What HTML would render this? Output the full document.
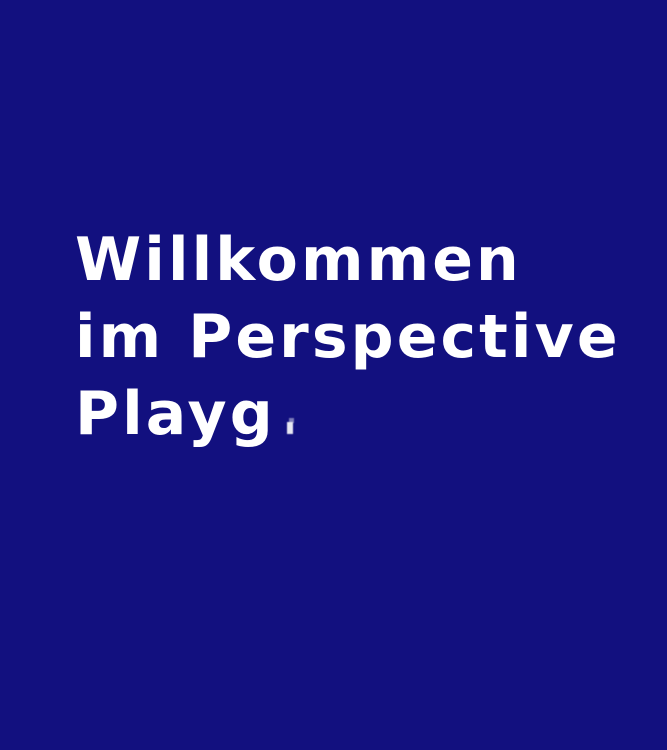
<!DOCTYPE html>
<html><head><meta charset="utf-8"><style>
html,body{margin:0;padding:0;}
body{width:667px;height:750px;background:#12107f;position:relative;overflow:hidden;font-family:"DejaVu Sans","Liberation Sans",sans-serif;}
h1{position:absolute;left:75px;top:222px;margin:0;color:#fff;font-weight:700;font-size:60px;line-height:77px;letter-spacing:3.1px;white-space:nowrap;}
.r{position:absolute;left:287px;top:422px;width:6px;height:12px;background:#fff;opacity:.9;filter:blur(0.6px);}
.r:before{content:"";position:absolute;left:2px;top:-4px;width:5px;height:5px;background:#fff;opacity:.5;}
</style></head><body>
<h1>Willkommen<br>im Perspective<br>Playg</h1>
<div class="r"></div>
</body></html>
